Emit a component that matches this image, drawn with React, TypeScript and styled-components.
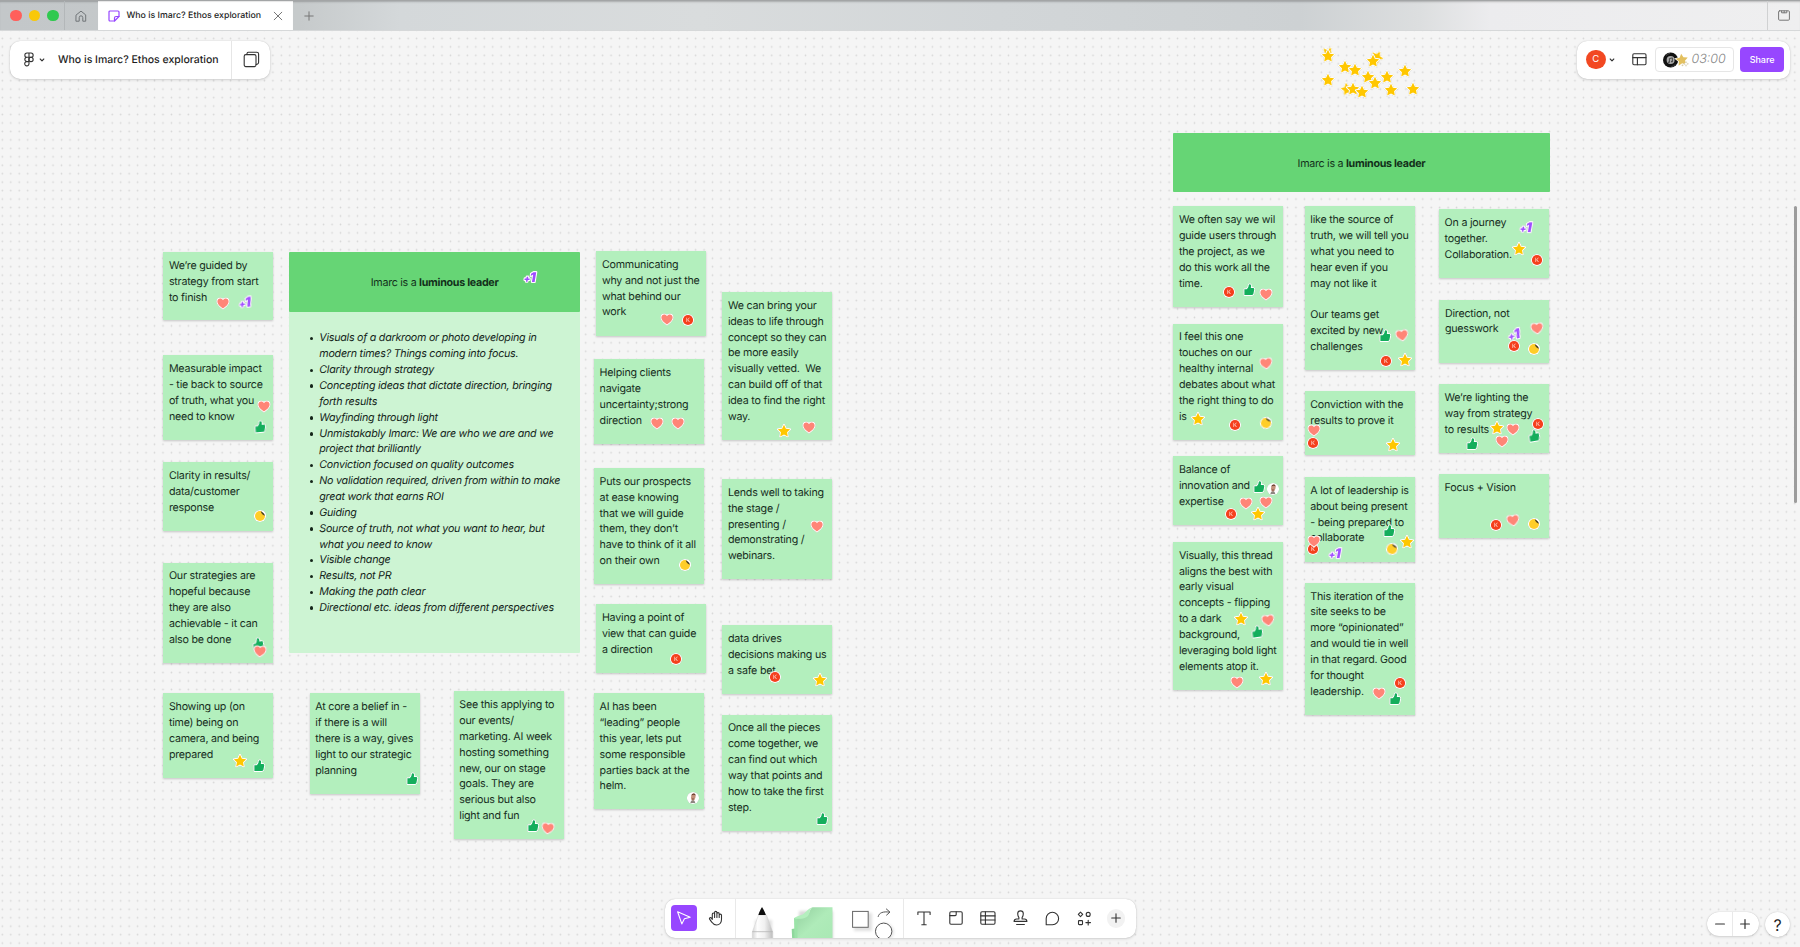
import React from "react";
import styled, { createGlobalStyle, css } from "styled-components";

const GlobalStyle = createGlobalStyle`
  * { box-sizing: border-box; }
  body { margin: 0; background: #f5f5f5; font-family: Inter, "Liberation Sans", sans-serif; color: #1e1e1e; text-rendering: geometricPrecision; }
`;

const Window = styled.div`
  width: 1800px;
  height: 947px;
  display: flex;
  flex-direction: column;
  overflow: hidden;
`;

/* ---------- Tab bar ---------- */

const TabBar = styled.header`
  height: 31px;
  flex: none;
  display: flex;
  align-items: stretch;
  border-top: 1px solid #a3a5a6;
  border-bottom: 1px solid #d6d8d9;
  box-shadow: inset 0 2px 2px -1px rgba(0, 0, 0, 0.22);
  background: linear-gradient(90deg, #c3c7c9 0, #c6cacb 300px, #d4d8da 400px, #d9dcdd 700px, #d2d6d8 1000px, #cdd1d3 1300px, #dcdedf 1420px, #ececee 1490px, #efeff0 1800px);
`;

const Traffic = styled.div`
  width: 65px;
  display: flex;
  align-items: center;
  gap: 7px;
  padding-left: 10px;
  border-right: 1px solid #b3b7b9;
`;

const Light = styled.span<{ $color: string }>`
  width: 11.5px;
  height: 11.5px;
  border-radius: 50%;
  background: ${(p) => p.$color};
`;

const BarCell = styled.div<{ $width: number }>`
  width: ${(p) => p.$width}px;
  display: flex;
  align-items: center;
  justify-content: center;
`;

const EdgeCell = styled(BarCell)`
  margin-left: auto;
  border-left: 1px solid #d0d1d2;
`;

const Tab = styled.div`
  width: 195.5px;
  display: flex;
  align-items: center;
  padding: 0 10.5px 0 10px;
  background: #fff;
  box-shadow: inset 0 1px 1px rgba(0, 0, 0, 0.1);
`;

const TabTitle = styled.span`
  margin-left: 7px;
  flex: 1;
  font-size: 8.8px;
  font-weight: 500;
  white-space: nowrap;
`;

/* ---------- Canvas ---------- */

const Canvas = styled.main`
  position: relative;
  flex: 1;
  overflow: hidden;
`;

/* Board coordinates are measured from the top of the window. */
const Board = styled.div`
  position: absolute;
  left: 0;
  top: -31px;
  width: 1800px;
  height: 947px;
`;

const Dots = styled.svg`
  position: absolute;
  left: 0;
  top: 0;
`;

const noteText = css`
  font-size: 10.7px;
  line-height: 15.86px;
  letter-spacing: -0.22px;
  color: #172e1d;
  white-space: pre;
`;

const NoteCard = styled.article<{ $x: number; $y: number; $h: number }>`
  position: absolute;
  left: ${(p) => p.$x}px;
  top: ${(p) => p.$y}px;
  width: 110px;
  height: ${(p) => p.$h}px;
  padding: 5.8px 5.6px;
  background: #b3efbd;
  box-shadow: 0 1px 2px rgba(0, 0, 0, 0.2);
  ${noteText}
`;

const Panel = styled.section<{ $x: number; $y: number; $w: number; $h: number }>`
  position: absolute;
  left: ${(p) => p.$x}px;
  top: ${(p) => p.$y}px;
  width: ${(p) => p.$w}px;
  height: ${(p) => p.$h}px;
  background: #cdf4d3;
  border-radius: 1px;
`;

const PanelHead = styled.h2`
  margin: 0;
  height: 59.8px;
  padding-top: 1px;
  display: flex;
  align-items: center;
  justify-content: center;
  border-radius: 1px;
  background: #66d575;
  color: #12301a;
  font-size: 10.7px;
  font-weight: 400;
  white-space: pre;
  letter-spacing: -0.28px;
`;

const Ideas = styled.ul`
  margin: 0;
  padding: 18.6px 0 0 30px;
  font-style: italic;
  list-style: none;
  ${noteText}
  letter-spacing: -0.24px;
  color: #14251a;
`;

const Idea = styled.li`
  &::before {
    content: "";
    float: left;
    width: 3.6px;
    height: 3.6px;
    margin: 6.4px 0 0 -9.6px;
    border-radius: 50%;
    background: #14251a;
  }
`;

const Pin = styled.svg<{ $x: number; $y: number; $r: number }>`
  position: absolute;
  left: ${(p) => p.$x - 8}px;
  top: ${(p) => p.$y - 8}px;
  transform: rotate(${(p) => p.$r}deg);
  overflow: visible;
  filter: drop-shadow(0 0.5px 0.6px rgba(0, 0, 0, 0.28));
`;

const ScrollThumb = styled.div`
  position: absolute;
  top: 175px;
  right: 3px;
  width: 3px;
  height: 297px;
  border-radius: 2px;
  background: #9c9c9c;
`;

/* ---------- Floating bars ---------- */

const FloatBar = styled.div`
  position: absolute;
  display: flex;
  align-items: center;
  background: #fff;
  border-radius: 10px;
  box-shadow: 0 0 1px rgba(0, 0, 0, 0.22), 0 1px 3px rgba(0, 0, 0, 0.14);
`;

const FileBar = styled(FloatBar)`
  left: 10px;
  top: 9.6px;
  width: 260px;
  height: 38.3px;
  padding-left: 14px;
`;

const FileTitle = styled.h1`
  margin: 0 0 0 13px;
  flex: 1;
  font-size: 10.5px;
  font-weight: 500;
  white-space: nowrap;
`;

const PagesButton = styled.div`
  width: 39px;
  flex: none;
  height: 100%;
  display: flex;
  align-items: center;
  justify-content: center;
  border-left: 1px solid #e6e6e6;
`;

const ShareBar = styled(FloatBar)`
  right: 9.6px;
  top: 9.6px;
  width: 213.7px;
  height: 38.3px;
  padding: 0 6.3px 0 9.3px;
`;

const Avatar = styled.span`
  width: 19.5px;
  height: 19.5px;
  margin-right: 3px;
  border-radius: 50%;
  background: #f24822;
  color: #fff;
  font-size: 9.5px;
  display: flex;
  align-items: center;
  justify-content: center;
`;

const LayoutSlot = styled.span`
  margin: 0 8.3px 0 17.2px;
  display: flex;
`;

const Timer = styled.div`
  width: 78.5px;
  height: 25px;
  border: 1px solid #e6e6e6;
  border-radius: 4px;
  display: flex;
  align-items: center;
  padding-left: 5.5px;
`;

const Clock = styled.span`
  margin-left: 2px;
  font-size: 12.5px;
  font-weight: 300;
  font-style: italic;
  color: #858585;
`;

const ShareButton = styled.button`
  margin-left: auto;
  width: 44px;
  height: 25px;
  padding: 0;
  border: 0;
  border-radius: 4px;
  background: #9747ff;
  color: #fff;
  font: 500 9px Inter, sans-serif;
`;

const ToolBar = styled(FloatBar)`
  left: 665px;
  top: 868px;
  width: 471px;
  height: 38.7px;
  overflow: hidden;
`;

const PointerTools = styled.div`
  width: 71px;
  flex: none;
  height: 100%;
  display: flex;
  align-items: center;
  gap: 6.3px;
  padding-left: 6px;
  border-right: 1px solid #e9e9e9;
`;

const ToolButton = styled.span<{ $active?: boolean }>`
  width: 26px;
  height: 26px;
  border-radius: 4px;
  display: flex;
  align-items: center;
  justify-content: center;
  background: ${(p) => (p.$active ? "#9747ff" : "transparent")};
`;

const DrawTools = styled.div`
  width: 167.5px;
  flex: none;
  height: 100%;
  border-right: 1px solid #e9e9e9;
`;

const InsertTools = styled.div`
  display: flex;
  align-items: center;
  gap: 6.2px;
  padding-left: 7.3px;
`;

const MoreButton = styled(ToolButton)`
  width: 18.5px;
  height: 18.5px;
  margin-left: 2.9px;
  border-radius: 50%;
  background: #f2f2f2;
`;

const ZoomBar = styled(FloatBar)`
  left: 1706.5px;
  top: 881px;
  width: 52px;
  height: 24.3px;
  padding: 0 1px;
  border-radius: 12.2px;
`;

const ZoomButton = styled.span`
  flex: 1;
  height: 100%;
  display: flex;
  align-items: center;
  justify-content: center;
  & + & { border-left: 1px solid #e9e9e9; }
`;

const HelpButton = styled(FloatBar)`
  left: 1765px;
  top: 881px;
  width: 25px;
  height: 25px;
  border-radius: 50%;
  justify-content: center;
  font-size: 16px;
`;

/* ---------- Icons ---------- */

type IconProps = { w: number; h: number; color?: string; sw?: number; children: React.ReactNode };

const IconSvg = styled.svg`
  flex: none;
`;

const Icon = ({ w, h, color = "#333", sw = 1, children }: IconProps) => (
  <IconSvg width={w} height={h} viewBox={`0 0 ${w} ${h}`} fill="none" stroke={color} strokeWidth={sw} strokeLinecap="round" strokeLinejoin="round">
    {children}
  </IconSvg>
);

const ChevronSlot = styled.span`
  display: flex;
  margin-left: 5px;
`;

const Chevron = () => (
  <Icon w={6} h={6} sw={1.1}><path d="M1.2 2l1.8 1.8L4.8 2" /></Icon>
);

const STAR = "M8 1.8l1.9 3.85 4.25.6-3.08 3 .73 4.23L8 11.5l-3.8 1.98.73-4.23-3.08-3 4.25-.6z";

type Kind = "heart" | "star" | "thumb" | "peel" | "k" | "plus" | "face";

const stickerArt: Record<Kind, React.ReactNode> = {
  heart: (
    <path d="M8 13.4C5.500 11.500 2.400 9.300 2.400 6.400c0-1.800 1.300-2.900 2.800-2.900 1.200 0 2.200.6 2.800 1.700.6-1.100 1.600-1.700 2.800-1.700 1.500 0 2.800 1.100 2.800 2.900 0 2.900-3.100 5.100-5.600 7z" fill="#ff8577" stroke="#fff" strokeWidth="2" paintOrder="stroke" />
  ),
  star: <path d={STAR} fill="#ffc700" stroke="#fff" strokeWidth="2" strokeLinejoin="round" paintOrder="stroke" />,
  thumb: (
    <path d="M3.4 7.2h2.2c1.2-1 2-2.4 2.1-4 .1-1.3 2.3-1.2 2.4.7.1.8-.1 1.6-.4 2.2h2.2c1 0 1.5.7 1.3 1.6l-.8 4c-.2.8-.7 1.2-1.5 1.2H3.4z" fill="#14ae5c" stroke="#fff" strokeWidth="2" strokeLinejoin="round" paintOrder="stroke" />
  ),
  peel: (
    <>
      <circle cx="8" cy="8" r="6.1" fill="#fff" />
      <circle cx="8" cy="8" r="5" fill="#ffcd29" />
      <path d="M9.4 2.8c.1 2.1 1.3 3.9 3.7 4.6L13.9 6 11.5 2.6z" fill="#fff" />
      <path d="M8.800 3.200c.3 2.200 1.800 3.900 4.100 4.500-.1-.9-.5-1.500-1-2.100-.8-1-1.800-1.900-3.100-2.400z" fill="#4a3f1c" />
    </>
  ),
  k: (
    <>
      <circle cx="8" cy="8" r="6.1" fill="#fff" />
      <circle cx="8" cy="8" r="5.1" fill="#f5401d" />
      <text x="8" y="10.1" textAnchor="middle" fontSize="5.8" fill="#ffe3dc" fontFamily="Inter, sans-serif">K</text>
    </>
  ),
  plus: (
    <text x="7.5" y="12.8" textAnchor="middle" fontSize="13.5" fontWeight="900" fontStyle="italic" letterSpacing="-0.6" fill="#9f4dff" stroke="#fff" strokeWidth="2.2" strokeLinejoin="round" paintOrder="stroke" fontFamily="Inter, sans-serif">
      <tspan fontSize="9.5">+</tspan><tspan>1</tspan>
    </text>
  ),
  face: (
    <>
      <circle cx="8" cy="8" r="6.1" fill="#fff" />
      <path d="M5.4 13c.2-2.2 1.4-2.9 2.6-3.1 1.3.3 2 1 2.2 3.1z" fill="#8d8580" />
      <ellipse cx="8.3" cy="7" rx="2.2" ry="3.5" transform="rotate(12 8.3 7)" fill="#c4917b" />
      <path d="M6.4 5.8C6.500 2.900 10.300 2.700 10.600 5.400 9.500 4.600 7.700 4.600 6.400 5.800z" fill="#6b3d2c" />
      <path d="M7 9h1.900" stroke="#5b2f25" strokeWidth=".7" />
    </>
  ),
};

const stickers: [Kind, number, number, number?][] = [
  ["heart", 222.7, 303], ["plus", 244.7, 302, -6], ["heart", 263.7, 406.3], ["thumb", 259.7, 426.7, -5], ["peel", 259.7, 516.3],
  ["thumb", 257.7, 643.5, -12], ["heart", 259.7, 650.5, 4], ["plus", 530.3, 277],
  ["star", 240.3, 760.7], ["thumb", 259.3, 765.7], ["thumb", 412, 779], ["thumb", 532.7, 826.3], ["heart", 548, 828, 6],
  ["heart", 667, 318.7], ["k", 687.7, 320.3], ["heart", 656.7, 422.7], ["heart", 677.7, 422.7], ["star", 783.7, 431.3], ["heart", 808.7, 426.7],
  ["peel", 685, 565], ["heart", 816.7, 525.7], ["k", 676, 658.7], ["k", 774.7, 677.3], ["star", 819.7, 680], ["face", 693, 798], ["thumb", 822.3, 819],
  ["k", 1229.3, 291.7], ["thumb", 1249, 290.3], ["heart", 1265.7, 293.7], ["heart", 1265.7, 363, -6], ["star", 1198.3, 419], ["k", 1235, 424.7], ["peel", 1265.7, 423, -12],
  ["thumb", 1385, 336], ["heart", 1402, 334.7, -8], ["k", 1386, 360.7], ["star", 1405, 360], ["k", 1313, 443], ["heart", 1313.7, 430], ["star", 1392.7, 445],
  ["plus", 1526, 227, 2], ["star", 1519.3, 249.3], ["k", 1537, 259.7], ["heart", 1537.3, 328, -6], ["plus", 1514, 333.5, -12], ["k", 1513.7, 345.7], ["peel", 1534, 349],
  ["star", 1497.3, 428], ["heart", 1512.7, 429], ["thumb", 1534, 436, -10], ["k", 1538.3, 424], ["heart", 1501.7, 440.7], ["thumb", 1472.3, 444.3],
  ["thumb", 1259.3, 487], ["face", 1272.7, 488.7], ["heart", 1246.3, 503], ["heart", 1266.3, 502], ["k", 1231, 514], ["star", 1258, 513.7],
  ["star", 1240.7, 619.3], ["heart", 1267.7, 619.7, -8], ["thumb", 1257, 632.3, -8], ["heart", 1237.3, 682.3], ["star", 1266, 678.7],
  ["thumb", 1389.3, 530.7], ["k", 1313, 549.3], ["heart", 1314.3, 541.3], ["plus", 1335.3, 553.3, 2], ["peel", 1391.7, 548.7, -8], ["star", 1407.3, 542.3],
  ["k", 1400.3, 682.7], ["heart", 1379.3, 693], ["thumb", 1394.7, 699.3], ["k", 1496.3, 524.7], ["heart", 1513, 520, -8], ["peel", 1533.7, 524],
  ["star", 1327.5, 52.5, 30], ["star", 1327.8, 56.3], ["star", 1377, 56.5, 30], ["star", 1373, 60.5], ["star", 1344.7, 66.7], ["star", 1354.7, 69.7],
  ["star", 1368, 77], ["star", 1375.4, 83.3], ["star", 1387.4, 77.3], ["star", 1405.3, 71.2], ["star", 1327.8, 80.2],
  ["star", 1347, 89.3, -10], ["star", 1353, 89], ["star", 1362.3, 92.2], ["star", 1390.5, 89.5], ["star", 1413.2, 89.3],
];

const notes: { x: number; y: number; h: number; lines: string[] }[] = [
  { x: 163.3, y: 252, h: 68, lines: ["We’re guided by", "strategy from start", "to finish"] },
  { x: 163.3, y: 355.3, h: 84.5, lines: ["Measurable impact", "- tie back to source", "of truth, what you", "need to know"] },
  { x: 163.3, y: 462.3, h: 69, lines: ["Clarity in results/", "data/customer", "response"] },
  { x: 163.3, y: 562.7, h: 100.5, lines: ["Our strategies are", "hopeful because", "they are also", "achievable - it can", "also be done"] },
  { x: 163.3, y: 693.3, h: 84.5, lines: ["Showing up (on", "time) being on", "camera, and being", "prepared"] },
  { x: 309.7, y: 693.3, h: 100.5, lines: ["At core a belief in -", "if there is a will", "there is a way, gives", "light to our strategic", "planning"] },
  { x: 453.7, y: 691.3, h: 148, lines: ["See this applying to", "our events/", "marketing. AI week", "hosting something", "new, our on stage", "goals. They are", "serious but also", "light and fun"] },
  { x: 596.3, y: 251, h: 84.5, lines: ["Communicating", "why and not just the", "what behind our", "work"] },
  { x: 594, y: 359.4, h: 84.6, lines: ["Helping clients", "navigate", "uncertainty;strong", "direction"] },
  { x: 594, y: 468, h: 116, lines: ["Puts our prospects", "at ease knowing", "that we will guide", "them, they don’t", "have to think of it all", "on their own"] },
  { x: 596.3, y: 604.4, h: 69, lines: ["Having a point of", "view that can guide", "a direction"] },
  { x: 594, y: 693.3, h: 116, lines: ["AI has been", "“leading” people", "this year, lets put", "some responsible", "parties back at the", "helm."] },
  { x: 722.3, y: 292, h: 148, lines: ["We can bring your", "ideas to life through", "concept so they can", "be more easily", "visually vetted.  We", "can build off of that", "idea to find the right", "way."] },
  { x: 722.3, y: 479, h: 100.3, lines: ["Lends well to taking", "the stage /", "presenting /", "demonstrating /", "webinars."] },
  { x: 722.3, y: 625.2, h: 69, lines: ["data drives", "decisions making us", "a safe bet."] },
  { x: 722.3, y: 714.7, h: 116.3, lines: ["Once all the pieces", "come together, we", "can find out which", "way that points and", "how to take the first", "step."] },
  { x: 1173.3, y: 206.3, h: 100.5, lines: ["We often say we wil", "guide users through", "the project, as we", "do this work all the", "time."] },
  { x: 1173.3, y: 323.7, h: 116, lines: ["I feel this one", "touches on our", "healthy internal", "debates about what", "the right thing to do", "is"] },
  { x: 1173.3, y: 456.4, h: 69, lines: ["Balance of", "innovation and", "expertise"] },
  { x: 1173.3, y: 541.9, h: 148, lines: ["Visually, this thread", "aligns the best with", "early visual", "concepts - flipping", "to a dark", "background,", "leveraging bold light", "elements atop it."] },
  { x: 1304.7, y: 206.4, h: 164, lines: ["like the source of", "truth, we will tell you", "what you need to", "hear even if you", "may not like it", "", "Our teams get", "excited by new", "challenges"] },
  { x: 1304.7, y: 391.4, h: 63.6, lines: ["Conviction with the", "results to prove it"] },
  { x: 1304.7, y: 477, h: 84.5, lines: ["A lot of leadership is", "about being present", "- being prepared to", "collaborate"] },
  { x: 1304.7, y: 582.8, h: 132, lines: ["This iteration of the", "site seeks to be", "more “opinionated”", "and would tie in well", "in that regard. Good", "for thought", "leadership."] },
  { x: 1439, y: 209.3, h: 69, lines: ["On a journey", "together.", "Collaboration."] },
  { x: 1439.3, y: 299.8, h: 63.5, lines: ["Direction, not", "guesswork"] },
  { x: 1439, y: 384.4, h: 69, lines: ["We’re lighting the", "way from strategy", "to results"] },
  { x: 1439, y: 474, h: 63.7, lines: ["Focus + Vision"] },
];

const ideas = [
  "Visuals of a darkroom or photo developing in\nmodern times? Things coming into focus.",
  "Clarity through strategy",
  "Concepting ideas that dictate direction, bringing\nforth results",
  "Wayfinding through light",
  "Unmistakably Imarc: We are who we are and we\nproject that brilliantly",
  "Conviction focused on quality outcomes",
  "No validation required, driven from within to make\ngreat work that earns ROI",
  "Guiding",
  "Source of truth, not what you want to hear, but\nwhat you need to know",
  "Visible change",
  "Results, not PR",
  "Making the path clear",
  "Directional etc. ideas from different perspectives",
];

const Heading = () => (
  <PanelHead>Imarc is a <b>luminous leader</b></PanelHead>
);

const DrawArt = () => (
  <svg width="167" height="38.7" viewBox="736 899 167 38.7">
    <defs>
      <linearGradient id="barrel" x1="0" x2="1" y1="0" y2="0">
        <stop offset="0" stopColor="#d4d4d4" />
        <stop offset=".25" stopColor="#fdfdfd" />
        <stop offset=".6" stopColor="#f0f0f0" />
        <stop offset="1" stopColor="#bdbdbd" />
      </linearGradient>
      <linearGradient id="paper" x1="0" x2="1" y1="0" y2="1">
        <stop offset="0" stopColor="#93d09f" />
        <stop offset=".5" stopColor="#afebb9" />
        <stop offset="1" stopColor="#a9e8b4" />
      </linearGradient>
      <filter id="soft" x="-30%" y="-30%" width="160%" height="160%"><feGaussianBlur stdDeviation="1.8" /></filter>
    </defs>
    <rect x="755" y="920" width="17" height="22" fill="#000" opacity=".12" filter="url(#soft)" />
    <path d="M758.5 915l-6.2 17v8h20.4v-8l-6.2-17z" fill="url(#barrel)" stroke="#d0d0d0" strokeWidth=".5" />
    <path d="M762 907c-1.4 2.2-2.8 5-3.7 8h7.6c-1-3-2.5-5.8-3.9-8z" fill="#0d0d0d" />
    <path d="M752.3 931.7h20.4" stroke="#b5b5b5" strokeWidth=".8" />
    <rect x="799" y="911" width="34" height="30" fill="#000" opacity=".15" filter="url(#soft)" />
    <path d="M791.7 929l6-1v12h-5.5z" fill="#8fd79d" />
    <path d="M794 918l8-2v24h-7.5z" fill="#9be3a8" />
    <path d="M797.500 919c5-.3 10-2.500 11.500-5.500 1-3 1.500-5 3.500-6.200h20v33h-35z" fill="url(#paper)" />
    <path d="M794 918.500c5 .8 11.500.4 14-2.500 2-2.600 1-6.500 4.500-8.700-5 1.500-6.500 5.500-10 7.200-3 1.400-6 1.400-8.500 4z" fill="#b4efbe" />
    <rect x="854" y="913" width="18" height="18" fill="#000" opacity=".12" filter="url(#soft)" />
    <circle cx="885" cy="932" r="9" fill="#000" opacity=".1" filter="url(#soft)" />
    <rect x="852.6" y="911.4" width="15.6" height="15.9" fill="#fff" stroke="#666" strokeWidth="1" />
    <circle cx="883.7" cy="931.3" r="8.2" fill="#fff" stroke="#555" strokeWidth="1" />
    <path d="M878.2 916.5c.8-3.8 5-5.3 11-4.4M886.4 909l3.6 3.1-3.4 3" fill="none" stroke="#555" strokeWidth="1" strokeLinecap="round" strokeLinejoin="round" />
  </svg>
);

export default function App() {
  return (
    <Window>
      <GlobalStyle />
      <TabBar>
        <Traffic>
          <Light $color="#ff5f5b" />
          <Light $color="#f9c80a" />
          <Light $color="#30c94f" />
        </Traffic>
        <BarCell $width={32.5}>
          <Icon w={12} h={12} color="#707578"><path d="M1.3 4.9L6 1.1l4.7 3.8v6.3H7.8V7.6a1.8 1.8 0 0 0-3.6 0v3.6H1.3z" /></Icon>
        </BarCell>
        <Tab>
          <Icon w={12} h={12} color="#9747ff" sw={1.2}>
            <path d="M2 1h8a1 1 0 0 1 1 1v4.500L6.500 11H2a1 1 0 0 1-1-1V2a1 1 0 0 1 1-1z" />
            <path d="M11 6.500H8c-1 0-1.500.6-1.500 1.500v3" />
          </Icon>
          <TabTitle>Who is Imarc? Ethos exploration</TabTitle>
          <Icon w={10} h={10} color="#777"><path d="M1.2 1.2l7.6 7.6M8.8 1.2L1.2 8.8" /></Icon>
        </Tab>
        <BarCell $width={32}>
          <Icon w={10} h={10} color="#777"><path d="M5 .8v8.4M.8 5h8.4" /></Icon>
        </BarCell>
        <EdgeCell $width={33}>
          <Icon w={12} h={11} color="#777">
            <rect x=".6" y=".8" width="10.8" height="9.4" rx="1" />
            <path d="M3.6 1v1.8h2.6V1M6.2 2.8h2.6V1" />
          </Icon>
        </EdgeCell>
      </TabBar>

      <Canvas>
        <Board>
          <Dots width="1800" height="947">
            <defs>
              <pattern id="grid" x="-1.9" y="34.2" width="8.455" height="8.455" patternUnits="userSpaceOnUse">
                <circle cx="4.23" cy="4.23" r=".85" fill="#d6d6d6" />
              </pattern>
            </defs>
            <rect width="1800" height="947" fill="url(#grid)" />
          </Dots>

          <Panel $x={289.3} $y={252} $w={290.7} $h={401}>
            <Heading />
            <Ideas>
              {ideas.map((t) => <Idea key={t}>{t}</Idea>)}
            </Ideas>
          </Panel>
          <Panel $x={1173.3} $y={132.7} $w={376.3} $h={59.8}>
            <Heading />
          </Panel>

          {notes.map((n) => (
            <NoteCard key={n.lines[0]} $x={n.x} $y={n.y} $h={n.h}>{n.lines.join("\n")}</NoteCard>
          ))}

          {stickers.map(([kind, x, y, r = 0], i) => (
            <Pin key={i} $x={x} $y={y} $r={r} width="16" height="16" viewBox="0 0 16 16">{stickerArt[kind]}</Pin>
          ))}
        </Board>

        <ScrollThumb />

        <FileBar>
          <Icon w={10} h={15} sw={1.1}>
            <path d="M5 1H3a2.150 2.150 0 0 0 0 4.300h2zM5 1h2a2.150 2.150 0 0 1 0 4.300H5zM5 5.300H3a2.150 2.150 0 0 0 0 4.300h2zM5 9.600H3A2.150 2.150 0 1 0 5 11.800z" />
            <circle cx="7" cy="7.45" r="2.15" />
          </Icon>
          <ChevronSlot><Chevron /></ChevronSlot>
          <FileTitle>Who is Imarc? Ethos exploration</FileTitle>
          <PagesButton>
            <Icon w={17} h={17} sw={1.1}>
              <rect x="1.2" y="3.6" width="11.8" height="12" rx="1.6" />
              <path d="M3.6 3.4l.5-1.2c.2-.6.7-.9 1.3-.9h8.400c1 0 1.800.8 1.800 1.800v8.500c0 .6-.4 1.100-.9 1.300l-1.500.6" />
            </Icon>
          </PagesButton>
        </FileBar>

        <ShareBar>
          <Avatar>C</Avatar>
          <Chevron />
          <LayoutSlot>
            <Icon w={15} h={13} sw={1.1}>
              <rect x=".8" y=".8" width="13.2" height="11" rx="1.2" />
              <path d="M.8 4.6H14M5.4 4.6v7.2" />
            </Icon>
          </LayoutSlot>
          <Timer>
            <svg width="28" height="18" viewBox="0 0 28 18">
              <circle cx="8.6" cy="9" r="7.6" fill="#111" />
              <circle cx="8.6" cy="9" r="4" fill="#a9a9a9" />
              <path d="M4 4.5a6.500 6.500 0 0 1 4-2.200M13.300 13.500a6.500 6.500 0 0 1-4 2.200" stroke="#555" strokeWidth=".8" fill="none" />
              <path d="M7.4 11.2V7.600l3-.7v3.600" stroke="#333" fill="none" strokeWidth=".8" />
              <circle cx="6.9" cy="11.2" r=".8" fill="#333" /><circle cx="9.9" cy="10.6" r=".8" fill="#333" />
              <g transform="translate(11.8 .8) rotate(-6 8 8)">
                <path d={STAR} fill="#e3c05f" stroke="#fff" strokeWidth="1.2" paintOrder="stroke" />
              </g>
              <path d="M24 10.5l.8 1.6 1.7.7-1.7.8-.8 1.7-.8-1.7-1.7-.8 1.7-.7z" fill="#fff" stroke="#c9bc97" strokeWidth=".5" />
              <circle cx="20.5" cy="14.3" r=".9" fill="#d9cda7" />
            </svg>
            <Clock>03:00</Clock>
          </Timer>
          <ShareButton>Share</ShareButton>
        </ShareBar>

        <ToolBar>
          <PointerTools>
            <ToolButton $active>
              <Icon w={16} h={16} color="#fff" sw={1.1}><path d="M1.6 1.7l4.2 12.2 2.6-5.2 5.8-1.5z" /></Icon>
            </ToolButton>
            <ToolButton>
              <Icon w={16} h={16} sw={1.1}>
                <path d="M4.300 9V4.200a1.150 1.150 0 0 1 2.300 0V2.500a1.150 1.150 0 0 1 2.300 0v1.300a1.150 1.150 0 0 1 2.300 0v1.500a1.150 1.150 0 0 1 2.300 0v4.300c0 3.200-2 5.400-5 5.400-2.400 0-3.500-1-4.600-2.700L1.600 9.200C.9 7.900 2.600 7 3.400 8.100l.9 1.200M6.600 4.200v3.300M8.900 3.800v3.700M11.200 5.200v2.300" />
              </Icon>
            </ToolButton>
          </PointerTools>
          <DrawTools><DrawArt /></DrawTools>
          <InsertTools>
            <ToolButton>
              <Icon w={14} h={15} sw={1.1}><path d="M.9 3.4V1h12.2v2.4M7 1v12.8M4.8 13.8h4.4" /></Icon>
            </ToolButton>
            <ToolButton>
              <Icon w={14} h={14} sw={1.1}>
                <rect x=".8" y=".8" width="12.4" height="12.4" rx="1.2" />
                <path d="M.8 4.6h5.4a1 1 0 0 0 1-1V.8" />
              </Icon>
            </ToolButton>
            <ToolButton>
              <Icon w={16} h={14} sw={1.1}>
                <rect x=".8" y=".8" width="14.2" height="12.4" rx="1.2" />
                <path d="M.8 4.9H15M.8 9H15M5.4.8v12.4" />
              </Icon>
            </ToolButton>
            <ToolButton>
              <Icon w={15} h={16} sw={1.1}>
                <path d="M5.9 9V7.600C5.200 6.500 4.700 5 4.700 3.700a2.800 2.800 0 0 1 5.600 0c0 1.300-.5 2.800-1.200 3.900V9h2.300c1.600 0 2.500.9 2.500 2.400H1.100C1.100 9.900 2 9 3.600 9zM3.600 14.500h7.800" />
              </Icon>
            </ToolButton>
            <ToolButton>
              <Icon w={15} h={15} sw={1.1}><path d="M1.2 13.7V7.500a6.200 6.200 0 1 1 6.300 6.200z" /></Icon>
            </ToolButton>
            <ToolButton>
              <Icon w={15} h={15} sw={1.1}>
                <path d="M3.5 1.2l2.2 2.2-2.2 2.2-2.2-2.2zM11.2 9.3v4.6M8.9 11.6h4.6" />
                <circle cx="11.2" cy="3.4" r="2" />
                <rect x="1.5" y="9.6" width="4" height="4" rx=".6" />
              </Icon>
            </ToolButton>
            <MoreButton>
              <Icon w={10} h={10} sw={1.1}><path d="M5 .7v8.6M.7 5h8.6" /></Icon>
            </MoreButton>
          </InsertTools>
        </ToolBar>

        <ZoomBar>
          <ZoomButton><Icon w={10} h={10} sw={1.2}><path d="M.6 5h8.8" /></Icon></ZoomButton>
          <ZoomButton><Icon w={10} h={10} sw={1.2}><path d="M5 .6v8.8M.6 5h8.8" /></Icon></ZoomButton>
        </ZoomBar>
        <HelpButton>?</HelpButton>
      </Canvas>
    </Window>
  );
}
